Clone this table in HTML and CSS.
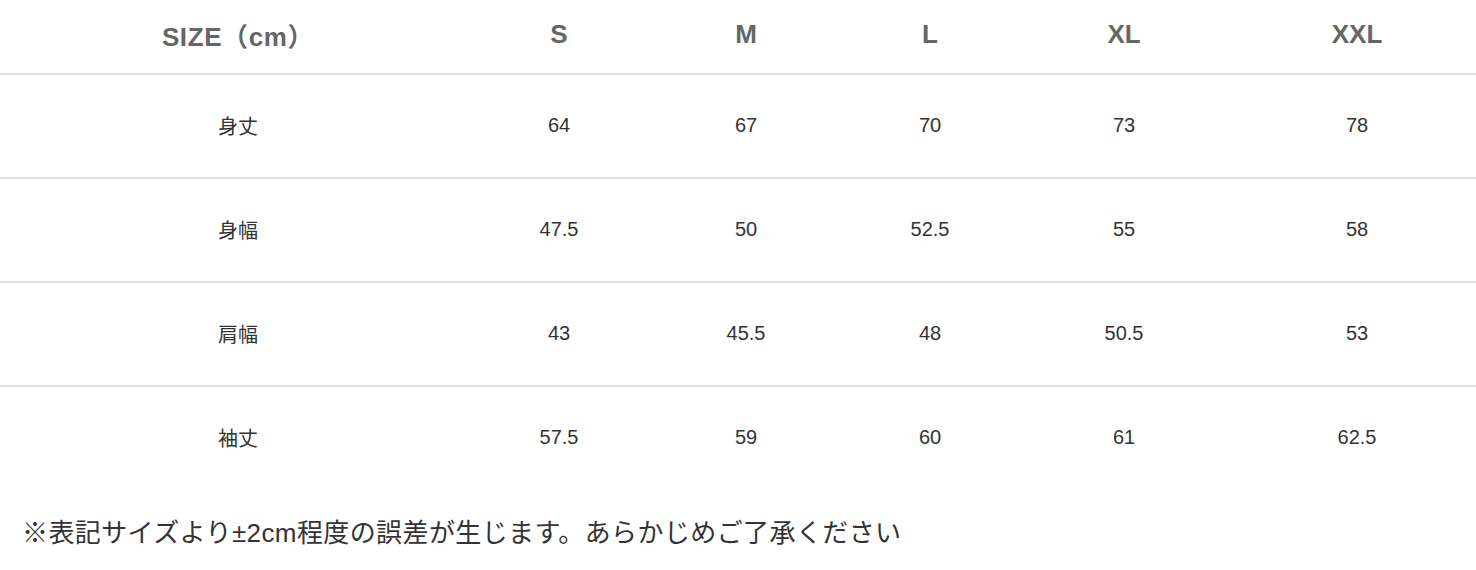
FILE: index.html
```html
<!DOCTYPE html>
<html lang="ja">
<head>
<meta charset="utf-8">
<title>Size chart</title>
<link rel="stylesheet" href="styles.css">
</head>
<body>
<table class="size-table">
  <colgroup>
    <col class="c1"><col class="c2"><col class="c3"><col class="c4"><col class="c5"><col class="c6">
  </colgroup>
  <thead>
    <tr><th>SIZE（cm）</th><th>S</th><th>M</th><th>L</th><th>XL</th><th>XXL</th></tr>
  </thead>
  <tbody>
    <tr><td>身丈</td><td>64</td><td>67</td><td>70</td><td>73</td><td>78</td></tr>
    <tr><td>身幅</td><td>47.5</td><td>50</td><td>52.5</td><td>55</td><td>58</td></tr>
    <tr><td>肩幅</td><td>43</td><td>45.5</td><td>48</td><td>50.5</td><td>53</td></tr>
    <tr><td>袖丈</td><td>57.5</td><td>59</td><td>60</td><td>61</td><td>62.5</td></tr>
  </tbody>
</table>
<p class="note">※表記サイズより±2cm程度の誤差が生じます。あらかじめご了承ください</p>
</body>
</html>
```

FILE: styles.css
```css
html, body {
  margin: 0;
  padding: 0;
  background: #fff;
}
body {
  font-family: "Liberation Sans", "Noto Sans CJK JP", sans-serif;
  color: #333;
}
.size-table {
  width: 1476px;
  border-collapse: collapse;
  table-layout: fixed;
}
.c1 { width: 476px; }
.c2 { width: 166px; }
.c3 { width: 208px; }
.c4 { width: 160px; }
.c5 { width: 228px; }
.c6 { width: 238px; }
.size-table th {
  height: 69px;
  padding: 0 0 4px;
  font-size: 26px;
  font-weight: bold;
  color: #666;
  text-align: center;
  vertical-align: middle;
  border-bottom: 2px solid #ddd;
}
.size-table th:first-child {
  letter-spacing: 0.6px;
}
.size-table td {
  height: 100px;
  padding: 0 0 2px;
  font-size: 20px;
  color: #333;
  text-align: center;
  vertical-align: middle;
  border-bottom: 2px solid #ddd;
}
.size-table tbody tr:last-child td {
  border-bottom: none;
}
.note {
  margin: 25px 0 0;
  padding-left: 22px;
  font-size: 26px;
  line-height: 39px;
  letter-spacing: 0.4px;
  color: #333;
}
```
